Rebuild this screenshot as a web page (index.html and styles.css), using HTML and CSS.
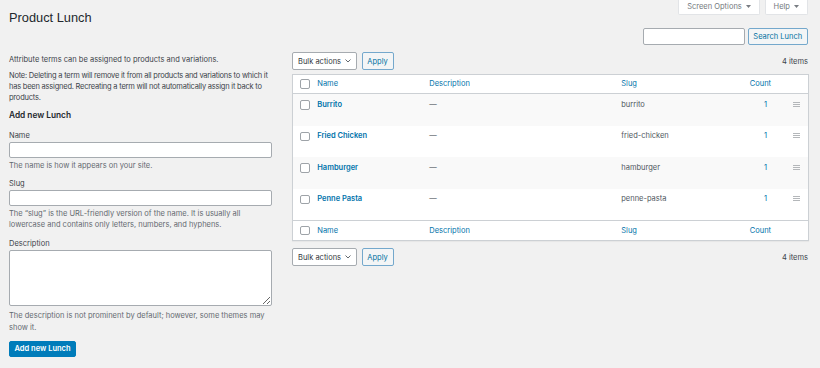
FILE: index.html
```html
<!DOCTYPE html>
<html lang="en">
<head>
<meta charset="utf-8">
<title>Product Lunch</title>
<link rel="stylesheet" href="styles.css">
</head>
<body>
<div class="wrap">
  <div class="top">
    <h1 class="title">Product Lunch</h1>
    <div class="meta-links">
      <button class="meta-tab tab-screen">Screen Options <svg class="tri" width="5" height="3" viewBox="0 0 5 3"><path d="M0 0h5L2.5 3z" fill="#787c82"/></svg></button>
      <button class="meta-tab tab-help">Help <svg class="tri" width="5" height="3" viewBox="0 0 5 3"><path d="M0 0h5L2.5 3z" fill="#787c82"/></svg></button>
    </div>
  </div>
  <div class="search-row">
    <input class="search-input" type="search" aria-label="Search">
    <button class="btn-secondary btn-search">Search Lunch</button>
  </div>
  <div class="cols">
    <div class="col-left">
      <p class="intro">Attribute terms can be assigned to products and variations.</p>
      <p class="note">Note: Deleting a term will remove it from all products and variations to which it has been assigned. Recreating a term will not automatically assign it back to products.</p>
      <h2 class="form-title">Add new Lunch</h2>
      <div class="field field-name">
        <label class="field-label">Name</label>
        <input class="field-input" type="text">
        <p class="hint">The name is how it appears on your site.</p>
      </div>
      <div class="field field-slug">
        <label class="field-label">Slug</label>
        <input class="field-input" type="text">
        <p class="hint">The “slug” is the URL-friendly version of the name. It is usually all lowercase and contains only letters, numbers, and hyphens.</p>
      </div>
      <div class="field field-desc">
        <label class="field-label">Description</label>
        <textarea class="field-textarea"></textarea>
        <p class="hint hint-desc">The description is not prominent by default; however, some themes may show it.</p>
      </div>
      <button class="btn-primary">Add new Lunch</button>
    </div>
    <div class="col-right">
      <div class="tablenav">
        <div class="bulk-select">Bulk actions <svg width="6" height="4" viewBox="0 0 6 4"><path d="M0.5 0.5 3 3 5.5 0.5" fill="none" stroke="#50575e" stroke-width="0.9"/></svg></div>
        <button class="btn-secondary btn-apply">Apply</button>
        <span class="items">4 items</span>
      </div>
      <table class="terms">
        <colgroup>
          <col class="c-check"><col class="c-name"><col class="c-desc"><col class="c-slug"><col class="c-count"><col class="c-handle">
        </colgroup>
        <thead>
          <tr><th class="check"><span class="cb"></span></th><th>Name</th><th>Description</th><th>Slug</th><th class="num">Count</th><th></th></tr>
        </thead>
        <tbody>
          <tr class="alt"><td class="check"><span class="cb"></span></td><td class="name">Burrito</td><td>—</td><td class="slug">burrito</td><td class="num count">1</td><td class="handle"><svg width="7" height="5" viewBox="0 0 7 5"><path d="M0 0.5h7M0 2.5h7M0 4.5h7" stroke="#b4b7ba" stroke-width="1"/></svg></td></tr>
          <tr><td class="check"><span class="cb"></span></td><td class="name">Fried Chicken</td><td>—</td><td class="slug">fried-chicken</td><td class="num count">1</td><td class="handle"><svg width="7" height="5" viewBox="0 0 7 5"><path d="M0 0.5h7M0 2.5h7M0 4.5h7" stroke="#b4b7ba" stroke-width="1"/></svg></td></tr>
          <tr class="alt"><td class="check"><span class="cb"></span></td><td class="name">Hamburger</td><td>—</td><td class="slug">hamburger</td><td class="num count">1</td><td class="handle"><svg width="7" height="5" viewBox="0 0 7 5"><path d="M0 0.5h7M0 2.5h7M0 4.5h7" stroke="#b4b7ba" stroke-width="1"/></svg></td></tr>
          <tr><td class="check"><span class="cb"></span></td><td class="name">Penne Pasta</td><td>—</td><td class="slug">penne-pasta</td><td class="num count">1</td><td class="handle"><svg width="7" height="5" viewBox="0 0 7 5"><path d="M0 0.5h7M0 2.5h7M0 4.5h7" stroke="#b4b7ba" stroke-width="1"/></svg></td></tr>
        </tbody>
        <tfoot>
          <tr><th class="check"><span class="cb"></span></th><th>Name</th><th>Description</th><th>Slug</th><th class="num">Count</th><th></th></tr>
        </tfoot>
      </table>
      <div class="tablenav tablenav-bottom">
        <div class="bulk-select">Bulk actions <svg width="6" height="4" viewBox="0 0 6 4"><path d="M0.5 0.5 3 3 5.5 0.5" fill="none" stroke="#50575e" stroke-width="0.9"/></svg></div>
        <button class="btn-secondary btn-apply">Apply</button>
        <span class="items">4 items</span>
      </div>
    </div>
  </div>
</div>
</body>
</html>
```

FILE: styles.css
```css
* { box-sizing: border-box; }
html, body { margin: 0; padding: 0; }
body {
  background: #f1f1f1;
  font-family: Inter, "Liberation Sans", Arial, sans-serif;
  font-size: 7.5px;
  line-height: 11px;
  color: #3c434a;
}
.wrap { padding: 0 12px 0 9px; }

.top {
  display: flex;
  justify-content: space-between;
  align-items: flex-start;
}
.title {
  margin: 0;
  padding-top: 9px;
  font-family: "Liberation Sans", Arial, sans-serif;
  font-size: 12.8px;
  line-height: 18px;
  font-weight: 400;
  color: #23282d;
}
.meta-links { display: flex; gap: 4.5px; }
.meta-tab {
  display: flex;
  align-items: center;
  justify-content: center;
  gap: 4px;
  height: 14.5px;
  padding: 0;
  background: #fff;
  border: 1px solid #e2e4e7;
  border-top: none;
  border-radius: 0 0 2px 2px;
  font-family: inherit;
  font-size: 7.5px;
  color: #72777c;
}
.tab-screen { width: 82px; }
.tab-help { width: 43.5px; }

.search-row {
  display: flex;
  justify-content: flex-end;
  gap: 2.5px;
  margin-top: 1px;
}
.search-input {
  width: 102px;
  height: 17px;
  margin: 0;
  border: 1px solid #a6abb0;
  border-radius: 2px;
  background: #fff;
}
.btn-secondary {
  height: 17px;
  padding: 0;
  margin: 0;
  background: #f3f5f6;
  border: 1px solid #74a8cc;
  border-radius: 2px;
  color: #0071a1;
  font-family: inherit;
  font-size: 7.5px;
}
.btn-search { width: 60.5px; }

.cols {
  display: flex;
  gap: 20px;
  margin-top: 7px;
}
.col-left { width: 263px; flex: none; }
.col-right { flex: 1; min-width: 0; }

.intro { margin: 1.5px 0 0; }
.note { margin: 5px 0 0; letter-spacing: -0.22px; }
.form-title {
  margin: 7px 0 0;
  font-size: 8.3px;
  line-height: 11px;
  font-weight: 600;
  color: #23282d;
}
.field-name { margin-top: 9px; }
.field-slug { margin-top: 7.5px; }
.field-desc { margin-top: 8px; }
.field-label { display: block; line-height: 11px; }
.field-input {
  display: block;
  width: 100%;
  height: 16px;
  margin: 1px 0 0;
  border: 1px solid #a6abb0;
  border-radius: 2px;
  background: #fff;
}
.field-textarea {
  display: block;
  width: 100%;
  height: 55.5px;
  margin: 1px 0 0;
  border: 1px solid #a6abb0;
  border-radius: 2px;
  background: #fff;
  resize: vertical;
}
.hint { margin: 2px 0 0; color: #646970; }
.hint-desc { margin-top: 4.5px; line-height: 11.5px; }

.btn-primary {
  display: block;
  width: 67px;
  height: 16px;
  margin-top: 7.5px;
  padding: 0;
  background: #007cba;
  border: 1px solid #007cba;
  border-radius: 2px;
  color: #fff;
  font-family: inherit;
  font-size: 7.5px;
  font-weight: 600;
}

.tablenav {
  display: flex;
  align-items: center;
  gap: 4.5px;
  height: 18px;
  margin-bottom: 3.5px;
}
.tablenav-bottom { margin: 7.5px 0 0; }
.bulk-select {
  display: flex;
  align-items: center;
  justify-content: space-between;
  width: 65px;
  height: 18px;
  padding: 0 5px 0 5px;
  background: #fff;
  border: 1px solid #a6abb0;
  border-radius: 2px;
  color: #32373c;
}
.btn-apply { width: 32px; height: 18px; }
.items { margin-left: auto; color: #3c434a; }

.terms {
  width: 100%;
  table-layout: fixed;
  border-collapse: collapse;
  background: #fff;
  border: 1px solid #ccd0d4;
  box-shadow: 0 1px 1px rgba(0,0,0,0.04);
}
.c-check { width: 19px; }
.c-name { width: 112px; }
.c-desc { width: 192px; }
.c-slug { width: 128px; }
.c-count { width: 42px; }
.c-handle { width: 23px; }

.terms th {
  height: 19.5px;
  padding: 0 5.75px;
  text-align: left;
  font-weight: 400;
  color: #0073aa;
  vertical-align: middle;
}
.terms th.num { padding-right: 14px; }
.terms thead th { border-bottom: 1px solid #ccd0d4; }
.terms tfoot th { border-top: 1px solid #ccd0d4; }
.terms td {
  padding: 4.5px 5.75px 16px;
  vertical-align: top;
  color: #50575e;
}
.terms tr.alt td { background: #f9f9f9; }
.terms .check { padding-left: 7px; padding-right: 0; }
.terms td.check { padding-top: 6px; }
.cb {
  display: block;
  width: 9.5px;
  height: 9.5px;
  border: 1px solid #9ea3a8;
  border-radius: 2px;
  background: #fff;
}
.terms .num { text-align: center; }
.terms td.name { font-weight: 600; color: #0073aa; }
.terms td.num.count { color: #0073aa; padding-left: 8px; }
.terms td.handle { text-align: center; padding-left: 0; padding-right: 0; padding-top: 7.5px; line-height: 5px; }
.terms td.handle svg { display: inline-block; }
```
